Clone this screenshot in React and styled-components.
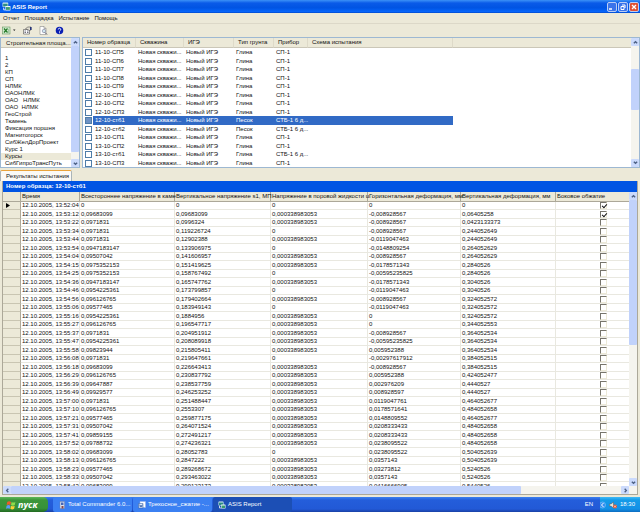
import React from 'react';
import styled, { createGlobalStyle, css } from 'styled-components';

const palette = {
  face: '#ece9d8',
  shade: '#aca899',
  line: '#e9e8e0',
  select: '#316ac5',
  caption: '#0054e3',
  thumb: '#c1d2fb',
  border: '#9db8d2',
};

const sites = ['', '1', '2', 'КП', 'СП', 'НЛМК', 'ОАОНЛМК', 'ОАО   НЛМК', 'ОАО  НЛМК', 'ГеоСтрой', 'Тюмень', 'Фиксация поршня', 'Магнитогорск', 'СибЖелДорПроект', 'Курс 1', 'Курсы', 'СибГипроТрансПуть'];

const samples = [
  ['11-10-СП5', 'Глина', 'СП-1'],
  ['11-10-СП6', 'Глина', 'СП-1'],
  ['11-10-СП7', 'Глина', 'СП-1'],
  ['11-10-СП8', 'Глина', 'СП-1'],
  ['11-10-СП9', 'Глина', 'СП-1'],
  ['12-10-СП1', 'Глина', 'СП-1'],
  ['12-10-СП2', 'Глина', 'СП-1'],
  ['12-10-СП3', 'Глина', 'СП-1'],
  ['12-10-стб1', 'Песок', 'СТБ-1 6 д...'],
  ['12-10-стб2', 'Песок', 'СТБ-1 6 д...'],
  ['13-10-СП1', 'Глина', 'СП-1'],
  ['13-10-СП2', 'Глина', 'СП-1'],
  ['13-10-стб1', 'Глина', 'СТБ-1 6 д...'],
  ['13-10-СП3', 'Глина', 'СП-1'],
];

const P = '0,000338983053';
const results = [
  ['13:52:04', '0', '0', '0', '0', '0'],
  ['13:53:12', '0,09683099', '0,09683099', P, '-0,008928567', '0,06405258'],
  ['13:53:22', '0,0971831', '0,0996324', P, '-0,008928567', '0,0423133373'],
  ['13:53:34', '0,0971831', '0,119226724', '0', '-0,008928567', '0,244052649'],
  ['13:53:44', '0,0971831', '0,12902388', P, '-0,0119047463', '0,244052649'],
  ['13:53:54', '0,0947183147', '0,133906975', '0', '-0,0148809254', '0,264052629'],
  ['13:54:04', '0,09507042', '0,141606957', P, '-0,008928567', '0,264052629'],
  ['13:54:15', '0,0975352153', '0,151419625', P, '-0,0178571343', '0,2840526'],
  ['13:54:25', '0,0975352153', '0,158767492', '0', '-0,00595235825', '0,2840526'],
  ['13:54:36', '0,0947183147', '0,165747762', P, '-0,0178571343', '0,3040526'],
  ['13:54:46', '0,0954225361', '0,173799857', '0', '-0,0119047463', '0,3040526'],
  ['13:54:56', '0,096126765', '0,179402664', P, '-0,008928567', '0,324052572'],
  ['13:55:06', '0,09577465', '0,183949143', '0', '-0,0119047463', '0,324052572'],
  ['13:55:16', '0,0954225361', '0,1884956', P, '0', '0,324052572'],
  ['13:55:27', '0,096126765', '0,196547717', P, '0', '0,344052553'],
  ['13:55:37', '0,0971831', '0,204951912', P, '-0,008928567', '0,364052534'],
  ['13:55:47', '0,0954225361', '0,208089918', P, '-0,00595235825', '0,364052534'],
  ['13:55:58', '0,09823944', '0,215805411', P, '0,005952388', '0,364052534'],
  ['13:56:08', '0,0971831', '0,219647661', '0', '-0,00297617912', '0,384052515'],
  ['13:56:18', '0,09683099', '0,226643413', P, '-0,008928567', '0,384052515'],
  ['13:56:29', '0,096126765', '0,230837792', P, '0,005952388', '0,424052477'],
  ['13:56:39', '0,09647887', '0,238537759', P, '0,002976209', '0,4440527'],
  ['13:56:49', '0,09929577', '0,246253252', P, '0,008928597', '0,4440527'],
  ['13:57:00', '0,0971831', '0,251488447', P, '0,0119047761', '0,464052677'],
  ['13:57:10', '0,096126765', '0,2553307', P, '0,0178571641', '0,484052658'],
  ['13:57:21', '0,09577465', '0,259877175', P, '0,0148809552', '0,464052677'],
  ['13:57:31', '0,09507042', '0,264071524', P, '0,0208333433', '0,484052658'],
  ['13:57:41', '0,09859155', '0,272491217', P, '0,0208333433', '0,484052658'],
  ['13:57:52', '0,09788732', '0,274236321', P, '0,0238095522', '0,484052658'],
  ['13:58:02', '0,09683099', '0,28052783', '0', '0,0238095522', '0,504052639'],
  ['13:58:13', '0,096126765', '0,2847222', P, '0,0357143', '0,504052639'],
  ['13:58:23', '0,09577465', '0,289268672', P, '0,03273812', '0,5240526'],
  ['13:58:33', '0,09507042', '0,293463022', P, '0,0357143', '0,5240526'],
  ['13:58:43', '0,09683099', '0,299123173', P, '0,0416666905', '0,5440526'],
];

const GlobalStyle = createGlobalStyle`
  * { box-sizing: border-box; }
  body {
    margin: 0;
    font-family: "Liberation Sans", Arial, sans-serif;
    font-size: 6px;
    line-height: 7px;
    color: #111;
    background: ${palette.face};
  }
  button, input { font: inherit; margin: 0; padding: 0; border: 0; color: inherit; }
  table { border-spacing: 0; table-layout: fixed; }
  th, td { padding: 0; font-weight: 400; text-align: left; white-space: nowrap; }
`;

const Window = styled.div`
  display: flex;
  flex-direction: column;
  height: 100vh;
  overflow: hidden;
`;

const TitleBar = styled.header`
  display: flex;
  align-items: center;
  gap: 1px;
  flex: 0 0 13px;
  padding: 0 1px 0 2px;
  background: linear-gradient(#3c92f7 0, #0a5be8 3px, #0054e3 60%, #0666fb 90%, #0046c8);

  h1 {
    flex: 1;
    margin: 0;
    font: bold 6px/8px "Liberation Sans", sans-serif;
    color: white;
  }
`;

const CaptionButton = styled.button`
  display: flex;
  width: 10px;
  height: 10px;
  border: 1px solid #b9cdf5;
  border-radius: 2px;
  background: ${(props) => (props.$close ? '#df5033' : '#3b74ea')};

  svg {
    width: 8px;
    height: 8px;
  }
`;

const MenuBar = styled.nav`
  display: flex;
  align-items: center;
  gap: 5px;
  flex: 0 0 11px;
  padding-left: 3px;
  border-bottom: 1px solid #dcd8c8;
`;

const MenuButton = styled.button`
  background: none;
`;

const ToolBar = styled.div`
  display: flex;
  align-items: center;
  gap: 7px;
  flex: 0 0 13px;
  padding-left: 2px;
`;

const ToolButton = styled.button`
  display: flex;
  background: none;

  svg {
    height: 9px;
  }
`;

const TopArea = styled.div`
  display: grid;
  grid-template-columns: 80px 1fr;
  gap: 2px;
  flex: 0 0 131px;
`;

const Panel = styled.section`
  display: flex;
  min-width: 0;
  border: 1px solid ${palette.border};
  background: white;
`;

const PanelBody = styled.div`
  flex: 1;
  min-width: 0;
  overflow: hidden;
`;

const SiteHeader = styled.h2`
  height: 10px;
  margin: 0;
  padding-left: 5px;
  font: inherit;
  line-height: 10px;
  white-space: nowrap;
  background: ${palette.face};
  border-bottom: 1px solid #cbc7b8;
`;

const SiteList = styled.ul`
  margin: 0;
  padding: 0;
  list-style: none;
`;

const SiteItem = styled.li`
  height: 7px;
  padding-left: 4px;
  white-space: pre;
  background: ${(props) => (props.$selected ? palette.face : 'none')};
`;

const SampleBody = styled(PanelBody)`
  background: linear-gradient(${palette.face} 9px, #cbc7b8 9px, #cbc7b8 10px, white 10px);
`;

const SampleTable = styled.table`
  width: 370px;

  thead {
    height: 10px;
  }
  th {
    padding-left: 4px;
    border-bottom: 1px solid #cbc7b8;
    border-right: 1px solid #dedac9;
  }
  td {
    padding-left: 2px;
  }
`;

const SampleRow = styled.tr`
  height: 8px;
  &:nth-child(odd) {
    height: 9px;
  }
  ${(props) =>
    props.$selected &&
    css`
      td {
        color: white;
        background: ${palette.select};
      }
      td:first-child {
        background: linear-gradient(to right, white 10px, ${palette.select} 10px);
      }
    `}
`;

const SampleName = styled.label`
  display: flex;
  align-items: center;
  gap: 3px;
`;

const SampleCheck = styled.input`
  appearance: none;
  width: 7px;
  height: 7px;
  border: 1px solid #4f7da8;
  background: ${(props) => (props.checked ? '#6f93c4' : 'white')};
`;

const Scroll = styled.div`
  display: flex;
  flex-direction: ${(props) => (props.$horizontal ? 'row' : 'column')};
  flex: 0 0 8px;
  background: #f5f4ee;
`;

const ScrollButton = styled.button`
  display: flex;
  align-items: center;
  justify-content: center;
  flex: 0 0 8px;
  border-radius: 1px;
  background: #cbdafc;

  svg {
    width: 5px;
    height: 5px;
  }
`;

const ScrollThumb = styled.div`
  flex: ${(props) => props.$size};
  border-radius: 1px;
  background: ${palette.thumb};
`;

const ScrollGap = styled.div`
  flex: ${(props) => props.$size};
`;

const TabStrip = styled.div`
  display: flex;
  flex: 0 0 13px;
  align-items: flex-end;
`;

const Tab = styled.button`
  height: 11px;
  padding: 0 2px 0 5px;
  background: #fbfaf6;
  border: 1px solid #a9b4b8;
  border-top: 1px solid #e9a33b;
  border-bottom: 0;
  border-radius: 2px 2px 0 0;
`;

const Results = styled.section`
  display: flex;
  flex-direction: column;
  flex: 1;
  min-height: 0;
  margin: 0 2px 2px;
  border: 1px solid ${palette.shade};
  border-top: 0;
`;

const ResultsCaption = styled.h2`
  flex: 0 0 11px;
  margin: 0;
  padding-left: 3px;
  font: inherit;
  font-weight: bold;
  line-height: 11px;
  color: white;
  background: ${palette.caption};
`;

const ResultsBody = styled.div`
  display: flex;
  flex: 1;
  min-height: 0;
  background: white;
`;

const ResultsTable = styled.table`
  width: 648px;

  thead {
    height: 10px;
    background: ${palette.face};
  }
  thead th {
    padding-left: 1px;
    border-right: 1px solid ${palette.shade};
    border-bottom: 1px solid ${palette.shade};
  }
  tbody tr {
    height: 8px;
  }
  tbody tr:nth-child(even) {
    height: 9px;
  }
  tbody th {
    background: ${palette.face};
    border-right: 1px solid ${palette.shade};
    border-bottom: 1px solid #c9c5b2;
  }
  td {
    padding-left: 1px;
    border-right: 1px solid ${palette.line};
    border-bottom: 1px solid ${palette.line};
  }
  svg {
    display: block;
    width: 4px;
    height: 5px;
    margin-left: 3px;
  }
`;

const FlagCheck = styled.input`
  appearance: none;
  display: block;
  width: 7px;
  height: 7px;
  margin: 0 auto;
  border: 1px solid #77756c;
  border-right-color: #ece9d8;
  border-bottom-color: #ece9d8;
  background: white;

  &:checked::before {
    content: '';
    display: block;
    width: 2px;
    height: 4px;
    margin-left: 2px;
    border: solid #111;
    border-width: 0 1px 1px 0;
    box-sizing: content-box;
    transform: rotate(42deg);
  }
`;

const TaskBar = styled.footer`
  display: flex;
  flex: 0 0 15px;
  gap: 1px;
  color: white;
  background: linear-gradient(#3c81f0 0, #245edb 3px, #2259d6 80%, #1941a5);
`;

const StartButton = styled.button`
  display: flex;
  align-items: center;
  gap: 2px;
  width: 48px;
  margin-right: 4px;
  padding-left: 6px;
  border-radius: 0 5px 5px 0;
  font: italic bold 9px/12px "Open Sans", sans-serif;
  background: linear-gradient(#5fb85c 0, #3c963a 3px, #36913a 75%, #226a20);

  svg {
    width: 10px;
    height: 10px;
  }
`;

const TaskButton = styled.button`
  display: flex;
  align-items: center;
  gap: 2px;
  width: 79px;
  padding-left: 5px;
  border-radius: 2px;
  white-space: nowrap;
  background: ${(props) => (props.$active ? '#1c4fb5' : '#3b80f2')};

  svg {
    flex: none;
    width: 8px;
    height: 8px;
  }
`;

const Language = styled.span`
  margin-left: auto;
  padding-right: 6px;
  line-height: 15px;
`;

const Tray = styled.div`
  display: flex;
  align-items: center;
  gap: 3px;
  padding-right: 5px;
  background: linear-gradient(#3fbaf6 0, #149be9 3px, #1290e6 80%, #0d6cc0);

  svg {
    height: 8px;
  }
`;

const arrows = {
  up: 'M1 4 L3 2 L5 4',
  down: 'M1 2 L3 4 L5 2',
  left: 'M4 1 L2 3 L4 5',
  right: 'M2 1 L4 3 L2 5',
};

const Arrow = ({ dir }) => (
  <ScrollButton aria-label={dir}>
    <svg viewBox="0 0 6 6">
      <path d={arrows[dir]} fill="none" stroke="#4d6185" strokeWidth="1.6" />
    </svg>
  </ScrollButton>
);

const AppIcon = () => (
  <svg width="9" height="9" viewBox="0 0 16 16">
    <rect x="1" y="1" width="10" height="8" rx="1" fill="#d8f2ee" />
    <rect x="2" y="3" width="8" height="5" fill="#2e8c86" />
    <rect x="6" y="7" width="9" height="8" rx="1" fill="#eefafa" />
    <path d="M7 9h7v5H7z" fill="#3b9a70" />
    <path d="M3 10v4h3" stroke="#fff" strokeWidth="1.5" fill="none" />
  </svg>
);

const SiteTree = () => (
  <Panel>
    <PanelBody>
      <SiteHeader>Строительная площа...</SiteHeader>
      <SiteList>
        {sites.map((site, i) => (
          <SiteItem key={i} $selected={site === 'Курсы'}>{site}</SiteItem>
        ))}
      </SiteList>
    </PanelBody>
    <Scroll>
      <Arrow dir="up" />
      <ScrollThumb $size={105} />
      <ScrollGap $size={7} />
      <Arrow dir="down" />
    </Scroll>
  </Panel>
);

const SampleList = () => (
  <Panel>
    <SampleBody>
      <SampleTable>
        <colgroup>
          <col width="53" />
          <col width="48" />
          <col width="50" />
          <col width="40" />
          <col width="34" />
          <col width="145" />
        </colgroup>
        <thead>
          <tr>
            <th>Номер образца</th>
            <th>Скважина</th>
            <th>ИГЭ</th>
            <th>Тип грунта</th>
            <th>Прибор</th>
            <th>Схема испытания</th>
          </tr>
        </thead>
        <tbody>
          {samples.map(([name, soil, device]) => {
            const selected = name === '12-10-стб1';
            return (
              <SampleRow key={name} $selected={selected}>
                <td>
                  <SampleName>
                    <SampleCheck type="checkbox" checked={selected} readOnly />
                    {name}
                  </SampleName>
                </td>
                <td>Новая скважи...</td>
                <td>Новый ИГЭ</td>
                <td>{soil}</td>
                <td>{device}</td>
                <td />
              </SampleRow>
            );
          })}
        </tbody>
      </SampleTable>
    </SampleBody>
    <Scroll>
      <Arrow dir="up" />
      <ScrollGap $size={23} />
      <ScrollThumb $size={42} />
      <ScrollGap $size={49} />
      <Arrow dir="down" />
    </Scroll>
  </Panel>
);

const ResultsGrid = () => (
  <Results>
    <ResultsCaption>Номер образца: 12-10-стб1</ResultsCaption>
    <ResultsBody>
      <PanelBody>
        <ResultsTable>
          <colgroup>
            <col width="18" />
            <col width="59" />
            <col width="95" />
            <col width="96" />
            <col width="97" />
            <col width="93" />
            <col width="95" />
            <col width="95" />
          </colgroup>
          <thead>
            <tr>
              <th />
              <th>Время</th>
              <th>Всестороннее напряжение в каме</th>
              <th>Вертикальное напряжение s1, МП</th>
              <th>Напряжение в поровой жидкости u</th>
              <th>Горизонтальная деформация, мм</th>
              <th>Вертикальная деформация, мм</th>
              <th>Боковое обжатие</th>
            </tr>
          </thead>
          <tbody>
            {results.map(([time, ...values], i) => (
              <tr key={time}>
                <th>
                  {i === 0 && (
                    <svg viewBox="0 0 4 5">
                      <path d="M0 0 L4 2.5 L0 5z" />
                    </svg>
                  )}
                </th>
                <td>12.10.2005, {time}</td>
                {values.map((value, n) => (
                  <td key={n}>{value}</td>
                ))}
                <td>
                  <FlagCheck type="checkbox" aria-label="Боковое обжатие" checked={i < 2} readOnly />
                </td>
              </tr>
            ))}
          </tbody>
        </ResultsTable>
      </PanelBody>
      <Scroll>
        <Arrow dir="up" />
        <ScrollThumb $size={145} />
        <ScrollGap $size={133} />
        <Arrow dir="down" />
      </Scroll>
    </ResultsBody>
    <Scroll $horizontal>
      <Arrow dir="left" />
      <ScrollThumb $size={510} />
      <ScrollGap $size={100} />
      <Arrow dir="right" />
      <ScrollGap $size="0 0 8px" />
    </Scroll>
  </Results>
);

const App = () => (
  <Window>
    <GlobalStyle />
    <TitleBar>
      <AppIcon />
      <h1>ASIS Report</h1>
      <CaptionButton aria-label="Свернуть">
        <svg viewBox="0 0 8 8"><path d="M1 6h3" stroke="#fff" strokeWidth="1.5" /></svg>
      </CaptionButton>
      <CaptionButton aria-label="Восстановить">
        <svg viewBox="0 0 8 8"><path d="M3 2h3v3M2 3.5h3v3H2z" stroke="#fff" fill="none" /></svg>
      </CaptionButton>
      <CaptionButton $close aria-label="Закрыть">
        <svg viewBox="0 0 8 8"><path d="M2 2l4 4M6 2l-4 4" stroke="#fff" strokeWidth="1.3" /></svg>
      </CaptionButton>
    </TitleBar>
    <MenuBar>
      <MenuButton>Отчет</MenuButton>
      <MenuButton>Площадка</MenuButton>
      <MenuButton>Испытание</MenuButton>
      <MenuButton>Помощь</MenuButton>
    </MenuBar>
    <ToolBar>
      <ToolButton aria-label="Excel">
        <svg viewBox="0 0 28 18">
          <rect x="1" y="2" width="15" height="14" fill="#d3ead0" stroke="#4c8a4a" />
          <path d="M4 5l7 8M11 5l-7 8" stroke="#237a26" strokeWidth="2.4" />
          <path d="M13 6v8" stroke="#7aa878" />
          <path d="M22 7h5l-2.5 3z" fill="#222" />
        </svg>
      </ToolButton>
      <ToolButton aria-label="Свойства">
        <svg viewBox="0 0 18 18">
          <path d="M1 7h12v9H1z" fill="#fff" stroke="#333" />
          <path d="M3 10h3M3 13h3M8 10h3M8 13h3" stroke="#445" strokeWidth="1.5" />
          <path d="M5 6l4-4h7v6l-3 1-4-2z" fill="#e2dfd2" stroke="#333" />
          <path d="M14 2h3v6h-3z" fill="#26357c" />
        </svg>
      </ToolButton>
      <ToolButton aria-label="Просмотр">
        <svg viewBox="0 0 18 18">
          <path d="M2 1h8l4 4v12H2z" fill="#fff" stroke="#777" />
          <path d="M10 1v4h4" fill="none" stroke="#777" />
          <circle cx="10" cy="10" r="3.5" fill="#cfe6ee" stroke="#668" />
          <path d="M12 13l4 4" stroke="#556" strokeWidth="2" />
        </svg>
      </ToolButton>
      <ToolButton aria-label="Справка">
        <svg viewBox="0 0 18 18">
          <circle cx="9" cy="9" r="7.5" fill="#0a1fb4" />
          <path d="M6.5 7a2.5 2.5 0 1 1 3.5 2.3q-1 .5-1 1.7M9 12.5v2" fill="none" stroke="#fff" strokeWidth="1.8" />
        </svg>
      </ToolButton>
    </ToolBar>
    <TopArea>
      <SiteTree />
      <SampleList />
    </TopArea>
    <TabStrip>
      <Tab>Результаты испытания</Tab>
    </TabStrip>
    <ResultsGrid />
    <TaskBar>
      <StartButton>
        <svg viewBox="0 0 16 16">
          <path d="M2 3q3-2 6 0L7 8Q4 6 1 8z" fill="#ee5a2c" />
          <path d="M9 3q3 2 6 0l-1 5q-3 2-6 0z" fill="#8fdc4c" />
          <path d="M1 9q3-2 6 0l-1 5q-3-2-6 0z" fill="#5b9cf5" />
          <path d="M8 9q3 2 6 0l-1 5q-3 2-6 0z" fill="#fbd034" />
        </svg>
        пуск
      </StartButton>
      <TaskButton>
        <svg viewBox="0 0 16 16">
          <path d="M4 1h9v14H4z" fill="#d9e0ee" stroke="#6a7dab" />
          <path d="M6 3h5v5H6z" fill="#4467b8" />
          <path d="M7 10h4v5H7z" fill="#8a4a4a" />
        </svg>
        Total Commander 6.0...
      </TaskButton>
      <TaskButton>
        <svg viewBox="0 0 16 16">
          <path d="M4 1h11v12H4z" fill="#fff" stroke="#9ab4e8" />
          <path d="M1 5h9v9H1z" fill="#dbe8ff" stroke="#2b579a" />
          <path d="M3 7l1.5 5L6 8l1.5 4L9 7" fill="none" stroke="#2b579a" strokeWidth="1.3" />
        </svg>
        Трехосное_сжатие -...
      </TaskButton>
      <TaskButton $active>
        <AppIcon />
        ASIS Report
      </TaskButton>
      <Language>EN</Language>
      <Tray>
        <svg viewBox="0 0 12 16">
          <circle cx="5" cy="8" r="6" fill="#2f8df0" stroke="#9fd4ff" />
          <path d="M7 4L3 8l4 4" fill="none" stroke="#fff" strokeWidth="2" />
        </svg>
        <svg viewBox="0 0 16 16">
          <path d="M1 6h3l5-4v12l-5-4H1z" fill="#e8e8e0" stroke="#555" />
          <circle cx="12" cy="11" r="4" fill="#e0522c" />
          <path d="M10 9l4 4M14 9l-4 4" stroke="#fff" strokeWidth="1.3" />
        </svg>
        <span>18:30</span>
      </Tray>
    </TaskBar>
  </Window>
);

export default App;
